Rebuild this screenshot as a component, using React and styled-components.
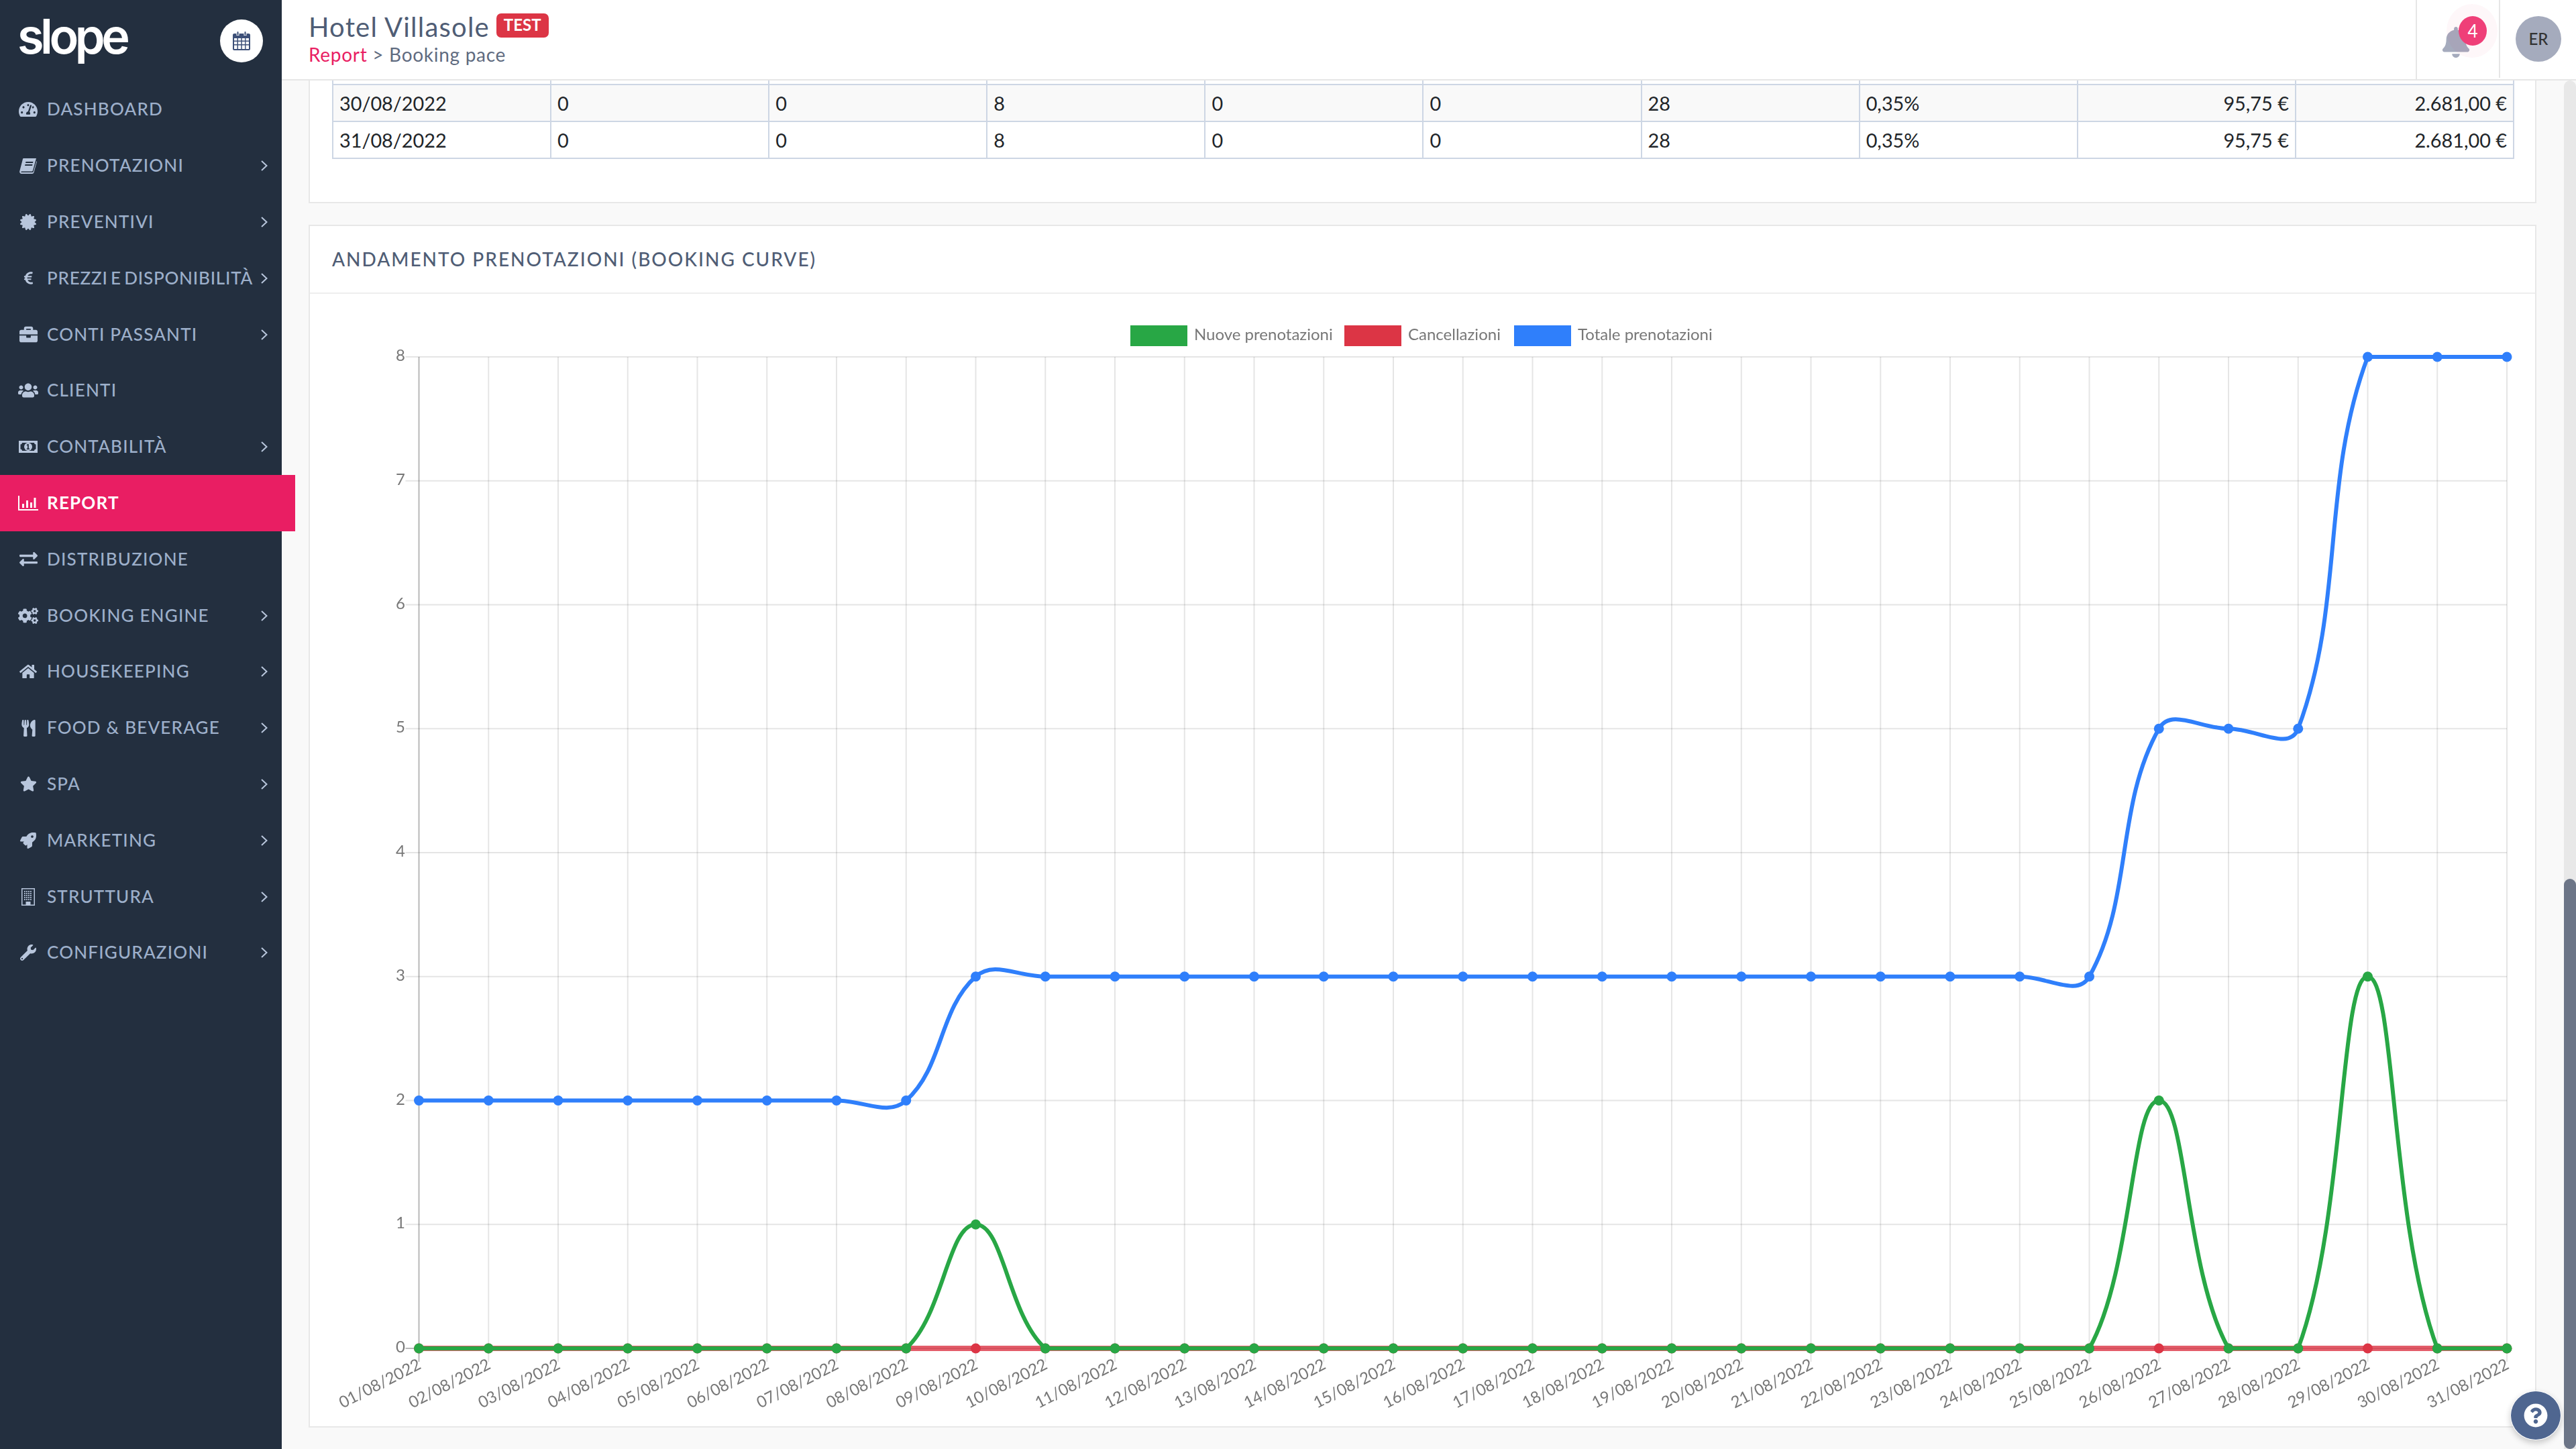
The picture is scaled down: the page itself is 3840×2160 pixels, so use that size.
import React from 'react';
import styled, { createGlobalStyle } from 'styled-components';
import {
    FaTachometerAlt, FaCertificate, FaEuroSign, FaBriefcase, FaUsers, FaExchangeAlt,
    FaCogs, FaHome, FaUtensils, FaStar, FaRocket, FaWrench, FaBell, FaQuestionCircle,
} from 'react-icons/fa';

// --- small hand drawn icons (the ones the packages don't have in this shape) ---

const BookIcon = () => (
    <svg width="26" height="24" viewBox="0 0 26 24">
        <path fill="currentColor" d="M6 1h19l-5 18c-.4 1-1 1.500-2 1.500H3.500c-1 0-1.500 1-.8 1.500H19c.8 0 1.500-.4 1.800-1.200L25.500 5 26 6l-4.500 16c-.3 1-1.200 2-2.500 2H3C1 24-.3 22 .3 20L5 2c.2-.6.500-1 1-1z" />
        <rect x="9" y="6" width="11" height="2" fill="#232f3f" transform="skewX(-14) translate(2 0)" />
        <rect x="8" y="10" width="11" height="2" fill="#232f3f" transform="skewX(-14) translate(3 0)" />
    </svg>
);

const MoneyIcon = () => (
    <svg width="28" height="18" viewBox="0 0 28 18">
        <path fill="currentColor" fillRule="evenodd" d="M0 0h28v18H0zM5 3c0 1.500-1 2.500-2.500 2.500v7C4 12.500 5 13.500 5 15h18c0-1.500 1-2.500 2.500-2.500v-7C24 5.500 23 4.500 23 3z" />
        <circle cx="14" cy="9" r="6" fill="currentColor" />
        <path fill="#232f3f" d="M13 5h1.800v6.500H16V13h-4.200v-1.500H13V6.800l-1.200.7V6z" />
    </svg>
);

const BarsIcon = () => (
    <svg width="30" height="22" viewBox="0 0 30 22">
        <path fill="currentColor" d="M0 0h2v20h28v2H0zM6 12h3v6H6zM12 7h3v11h-3zM18 10h3v8h-3zM23.500 3h3v15h-3z" />
    </svg>
);

const BuildingIcon = () => (
    <svg width="20" height="26" viewBox="0 0 20 26">
        <path fill="currentColor" fillRule="evenodd" d="M0 0h20v26H0zM1.500 1.500v23h5V20h7v4.500h5v-23z" />
        {[4, 7, 10, 13].map((x) => [4, 7, 10, 13, 16].map((y) => (
            <rect key={`${x}-${y}`} x={x} y={y} width="1.800" height="1.800" fill="currentColor" />
        )))}
    </svg>
);

const CalendarIcon = () => (
    <svg width="26" height="28" viewBox="0 0 26 28">
        <path fill="#3d5078" fillRule="evenodd" d="M2 3h3.500v3h4V3h7v3h4V3H24c1 0 2 1 2 2v21c0 1-1 2-2 2H2c-1 0-2-1-2-2V5c0-1 1-2 2-2zM2 10v3.500h4.500V10zm6 0v3.500h4.300V10zm5.800 0v3.500h4.300V10zm5.700 0v3.500H24V10zM2 15v4h4.500v-4zm6 0v4h4.300v-4zm5.800 0v4h4.300v-4zm5.700 0v4H24v-4zM2 20.500V26h4.500v-5.500zm6 0V26h4.300v-5.500zm5.800 0V26h4.300v-5.500zm5.700 0V26H24v-5.500z" />
        <rect x="6.500" y="0" width="2" height="5.500" rx="1" fill="#3d5078" />
        <rect x="17.500" y="0" width="2" height="5.500" rx="1" fill="#3d5078" />
    </svg>
);

const Chevron = () => (
    <svg width="10" height="16" viewBox="0 0 10 16">
        <path d="M1 1l7.500 7L1 15" fill="none" stroke="currentColor" strokeWidth="2" />
    </svg>
);

// --- data ---

const MENU = [
    { label: 'DASHBOARD', Icon: FaTachometerAlt, size: 28 },
    { label: 'PRENOTAZIONI', Icon: BookIcon, more: true },
    { label: 'PREVENTIVI', Icon: FaCertificate, size: 24, more: true },
    { label: 'PREZZI E DISPONIBILITÀ', Icon: FaEuroSign, size: 21, more: true, tight: true },
    { label: 'CONTI PASSANTI', Icon: FaBriefcase, size: 27, more: true },
    { label: 'CLIENTI', Icon: FaUsers, size: 30 },
    { label: 'CONTABILITÀ', Icon: MoneyIcon, more: true },
    { label: 'REPORT', Icon: BarsIcon, active: true },
    { label: 'DISTRIBUZIONE', Icon: FaExchangeAlt, size: 27 },
    { label: 'BOOKING ENGINE', Icon: FaCogs, size: 30, more: true },
    { label: 'HOUSEKEEPING', Icon: FaHome, size: 26, more: true },
    { label: 'FOOD & BEVERAGE', Icon: FaUtensils, size: 25, more: true },
    { label: 'SPA', Icon: FaStar, size: 25, more: true },
    { label: 'MARKETING', Icon: FaRocket, size: 24, more: true },
    { label: 'STRUTTURA', Icon: BuildingIcon, more: true },
    { label: 'CONFIGURAZIONI', Icon: FaWrench, size: 24, more: true },
];

const ROWS = [
    ['30/08/2022', '0', '0', '8', '0', '0', '28', '0,35%', '95,75 €', '2.681,00 €'],
    ['31/08/2022', '0', '0', '8', '0', '0', '28', '0,35%', '95,75 €', '2.681,00 €'],
];

const DAYS = Array.from({ length: 31 }, (_, i) => `${String(i + 1).padStart(2, '0')}/08/2022`);

const valuesFrom = (base, points) => DAYS.map((_, i) => (i in points ? points[i] : base));

const TOTAL = DAYS.map((_, i) => {
    if (i <= 7) return 2;
    if (i <= 24) return 3;
    if (i <= 27) return 5;
    return 8;
});
const NEW = valuesFrom(0, { 8: 1, 25: 2, 28: 3 });
const CANCELLED = valuesFrom(0, {});

// chart geometry, in page pixels
const LEFT = 624.5;
const RIGHT = 3737;
const ZERO = 2010;
const TOP = 532;
const xAt = (i) => LEFT + (i * (RIGHT - LEFT)) / 30;
const yAt = (v) => ZERO - (v * (ZERO - TOP)) / 8;

// same bezier maths as chart.js (tension 0.4, capped to the chart area)
function curve(values) {
    const pts = values.map((v, i) => ({ x: xAt(i), y: yAt(v) }));
    const cap = (p) => ({
        x: Math.min(RIGHT, Math.max(LEFT, p.x)),
        y: Math.min(ZERO, Math.max(TOP, p.y)),
    });
    const ctrl = pts.map((cur, i) => {
        const prev = pts[i - 1] || cur;
        const next = pts[i + 1] || cur;
        const d01 = Math.hypot(cur.x - prev.x, cur.y - prev.y);
        const d12 = Math.hypot(next.x - cur.x, next.y - cur.y);
        const total = d01 + d12 || 1;
        const fa = (0.4 * d01) / total;
        const fb = (0.4 * d12) / total;
        return {
            before: cap({ x: cur.x - fa * (next.x - prev.x), y: cur.y - fa * (next.y - prev.y) }),
            after: cap({ x: cur.x + fb * (next.x - prev.x), y: cur.y + fb * (next.y - prev.y) }),
        };
    });
    let d = `M${pts[0].x} ${pts[0].y}`;
    for (let i = 1; i < pts.length; i++) {
        const a = ctrl[i - 1].after;
        const b = ctrl[i].before;
        d += `C${a.x} ${a.y} ${b.x} ${b.y} ${pts[i].x} ${pts[i].y}`;
    }
    return d;
}

const SERIES = [
    { name: 'total', color: '#2f7ffb', values: TOTAL, width: 6, opacity: 1 },
    { name: 'cancelled', color: '#dc3545', values: CANCELLED, width: 8, opacity: 0.8 },
    { name: 'new', color: '#28a745', values: NEW, width: 6, opacity: 1 },
];

const LEGEND = [
    { label: 'Nuove prenotazioni', color: '#28a745', x: 1685 },
    { label: 'Cancellazioni', color: '#dc3545', x: 2004 },
    { label: 'Totale prenotazioni', color: '#2f7ffb', x: 2257 },
];

// --- the chart ---

const BookingChart = () => (
    <ChartSvg width="3317" height="1688" viewBox="462 438 3317 1688">
        {LEGEND.map((item) => (
            <g key={item.label}>
                <rect x={item.x} y="485" width="85" height="31" fill={item.color} />
                <ChartLabel x={item.x + 95} y="501" dominantBaseline="middle">{item.label}</ChartLabel>
            </g>
        ))}
        {[0, 1, 2, 3, 4, 5, 6, 7, 8].map((v) => (
            <g key={v}>
                <GridLine x1={LEFT - 20} x2={RIGHT} y1={yAt(v)} y2={yAt(v)} $strong={v === 0} />
                <ChartLabel x="604" y={yAt(v)} textAnchor="end" dominantBaseline="middle">{v}</ChartLabel>
            </g>
        ))}
        {DAYS.map((day, i) => (
            <g key={day}>
                <GridLine x1={xAt(i)} x2={xAt(i)} y1={TOP} y2={ZERO + 20} $strong={i === 0} />
                <ChartLabel
                    x={xAt(i) + 2}
                    y={ZERO + 24}
                    textAnchor="end"
                    dominantBaseline="middle"
                    transform={`rotate(-27 ${xAt(i) + 2} ${ZERO + 24})`}
                >
                    {day}
                </ChartLabel>
            </g>
        ))}
        {SERIES.map((s) => (
            <g key={s.name}>
                <path d={curve(s.values)} fill="none" stroke={s.color} strokeWidth={s.width} strokeOpacity={s.opacity} />
                {s.values.map((v, i) => (
                    <circle key={i} cx={xAt(i)} cy={yAt(v)} r="7.5" fill={s.color} />
                ))}
            </g>
        ))}
    </ChartSvg>
);

// --- page ---

const App = () => (
    <Page>
        <GlobalStyle />
        <Sidebar>
            <Brand>
                <Logo>slope</Logo>
                <CalendarButton><CalendarIcon /></CalendarButton>
            </Brand>
            {MENU.map(({ label, Icon, size, more, active, tight }) => (
                <MenuItem key={label} $active={active}>
                    <MenuIcon><Icon size={size} /></MenuIcon>
                    <MenuLabel $active={active} $tight={tight}>{label}</MenuLabel>
                    {more && <MenuArrow><Chevron /></MenuArrow>}
                </MenuItem>
            ))}
        </Sidebar>
        <Main>
            <Header>
                <Titles>
                    <TitleRow>
                        <Title>Hotel Villasole</Title>
                        <TestBadge>TEST</TestBadge>
                    </TitleRow>
                    <Breadcrumb><em>Report</em> &gt; Booking pace</Breadcrumb>
                </Titles>
                <BellCell>
                    <FaBell size={46} />
                    <BellBadge>4</BellBadge>
                </BellCell>
                <UserCell><Avatar>ER</Avatar></UserCell>
            </Header>
            <Body>
                <Content>
                    <TableCard>
                        <DataTable>
                            <tbody>
                                <CutRow>
                                    {ROWS[0].map((_, i) => <td key={i} />)}
                                </CutRow>
                                {ROWS.map((row, r) => (
                                    <DataRow key={row[0]} $striped={r === 0}>
                                        {row.map((cell, i) => (
                                            <DataCell key={i} $right={i >= 8}>{cell}</DataCell>
                                        ))}
                                    </DataRow>
                                ))}
                            </tbody>
                        </DataTable>
                    </TableCard>
                    <ChartCard>
                        <CardTitle>ANDAMENTO PRENOTAZIONI (BOOKING CURVE)</CardTitle>
                        <BookingChart />
                    </ChartCard>
                </Content>
                <ScrollTrack><ScrollThumb /></ScrollTrack>
            </Body>
        </Main>
        <HelpButton><FaQuestionCircle size={36} /></HelpButton>
    </Page>
);

const GlobalStyle = createGlobalStyle`
    html, body {
        margin: 0;
        padding: 0;
        background: #f9f9f9;
        overflow: hidden;
    }
    * {
        box-sizing: border-box;
    }
`;

const Page = styled.div`
    position: relative;
    display: flex;
    width: 3840px;
    height: 2160px;
    overflow: hidden;
    font-family: Lato, "Liberation Sans", sans-serif;
    background: #f9f9f9;
`;

const Sidebar = styled.nav`
    position: relative;
    z-index: 2;
    flex: 0 0 420px;
    background: #232f3f;
`;

const Brand = styled.div`
    display: flex;
    align-items: center;
    justify-content: space-between;
    height: 121.5px;
    padding: 0 28px 0 26px;
`;

const Logo = styled.div`
    margin-top: -14px;
    font-family: Inter, sans-serif;
    font-size: 72px;
    font-weight: 600;
    line-height: 1;
    letter-spacing: -5.5px;
    color: #fff;
`;

const CalendarButton = styled.div`
    display: flex;
    align-items: center;
    justify-content: center;
    width: 64px;
    height: 64px;
    border-radius: 50%;
    background: #fff;
`;

const MenuItem = styled.div`
    display: flex;
    align-items: center;
    height: 83.8px;
    padding: 0 21px 0 27px;
    margin-right: ${(p) => (p.$active ? '-20px' : '0')};
    background: ${(p) => (p.$active ? '#e91e63' : 'transparent')};
    color: ${(p) => (p.$active ? '#fff' : '#b8c6dc')};
`;

const MenuIcon = styled.span`
    display: flex;
    align-items: center;
    justify-content: center;
    flex: 0 0 30px;
`;

const MenuLabel = styled.span`
    margin-left: 13px;
    padding-bottom: 2px;
    font-size: 26px;
    font-weight: ${(p) => (p.$active ? 700 : 500)};
    letter-spacing: ${(p) => (p.$tight ? '0.8px' : '1.2px')};
    word-spacing: ${(p) => (p.$tight ? '-3px' : '0')};
    white-space: nowrap;
    color: ${(p) => (p.$active ? '#fff' : '#9dafca')};
`;

const MenuArrow = styled.span`
    display: flex;
    margin-left: auto;
`;

const Main = styled.div`
    display: flex;
    flex-direction: column;
    flex: 1;
    min-width: 0;
`;

const Header = styled.header`
    display: flex;
    flex: 0 0 120px;
    background: #fff;
    border-bottom: 2px solid #e6e6e6;
`;

const Titles = styled.div`
    flex: 1;
    padding: 16px 0 0 40px;
`;

const TitleRow = styled.div`
    display: flex;
    align-items: flex-start;
`;

const Title = styled.h1`
    margin: 0;
    font-size: 40px;
    font-weight: 400;
    line-height: 48px;
    letter-spacing: 1.2px;
    color: #4f5d75;
`;

const TestBadge = styled.span`
    margin: 4px 0 0 10px;
    padding: 0 11px;
    height: 36px;
    border-radius: 7px;
    background: #dc3545;
    color: #fff;
    font-size: 24px;
    font-weight: 700;
    line-height: 34px;
`;

const Breadcrumb = styled.div`
    font-size: 28px;
    line-height: 34px;
    letter-spacing: 0.7px;
    color: #5f6b80;
    em {
        font-style: normal;
        color: #e91e63;
    }
`;

const BellCell = styled.div`
    position: relative;
    display: flex;
    align-items: flex-end;
    flex: 0 0 124px;
    padding: 0 0 32px 35px;
    border-left: 2px solid #e6e6e6;
    color: #a5abbd;
    &::before {
        content: "";
        position: absolute;
        left: 44px;
        top: 6px;
        width: 76px;
        height: 80px;
        border-radius: 50%;
        background: rgba(233, 30, 99, 0.035);
    }
`;

const BellBadge = styled.span`
    position: absolute;
    left: 62px;
    top: 24px;
    width: 42px;
    height: 44px;
    border-radius: 50%;
    background: #ef3f78;
    color: #fff;
    font-size: 26px;
    line-height: 44px;
    text-align: center;
`;

const UserCell = styled.div`
    flex: 0 0 115px;
    height: 116px;
    padding: 24px 0 0 23px;
    border-left: 2px solid #e6e6e6;
`;

const Avatar = styled.div`
    width: 68px;
    height: 68px;
    border-radius: 50%;
    background: #a5abbd;
    color: #333;
    font-size: 24px;
    font-weight: 500;
    line-height: 68px;
    text-align: center;
`;

const Body = styled.div`
    display: flex;
    flex: 1;
    min-height: 0;
`;

const Content = styled.main`
    flex: 1;
    min-width: 0;
    padding: 0 41px 0 40px;
`;

const TableCard = styled.section`
    height: 183px;
    padding: 0 31px 0 33px;
    background: #fff;
    border: 2px solid #e8e8e8;
    border-top: 0;
`;

const DataTable = styled.table`
    width: 100%;
    table-layout: fixed;
    border-collapse: collapse;
    font-size: 28.8px;
    color: #212529;
    td {
        border: 2px solid #cdd6e4;
    }
    tr:first-child td {
        border-top: 0;
    }
`;

const CutRow = styled.tr`
    height: 6px;
`;

const DataRow = styled.tr`
    height: 55px;
    background: ${(p) => (p.$striped ? '#f9f9f9' : '#fff')};
`;

const DataCell = styled.td`
    padding: 0 9px;
    text-align: ${(p) => (p.$right ? 'right' : 'left')};
`;

const ChartCard = styled.section`
    margin-top: 32px;
    background: #fff;
    border: 2px solid #e8e8e8;
`;

const CardTitle = styled.h2`
    height: 101px;
    margin: 0;
    padding: 0 33px;
    font-size: 28px;
    font-weight: 500;
    line-height: 98px;
    letter-spacing: 2px;
    color: #4f5d75;
    border-bottom: 2px solid #eeeeee;
`;

const ChartSvg = styled.svg`
    display: block;
    filter: blur(0.6px);
`;

const GridLine = styled.line`
    stroke: ${(p) => (p.$strong ? 'rgba(0, 0, 0, 0.28)' : 'rgba(0, 0, 0, 0.1)')};
    stroke-width: 2;
`;

const ChartLabel = styled.text`
    font-family: Lato, "Liberation Sans", sans-serif;
    font-size: 24px;
    fill: #777;
`;

const ScrollTrack = styled.div`
    display: flex;
    flex-direction: column;
    flex: 0 0 18px;
    padding-top: 1190px;
    background: #e8e8e8;
    border-radius: 9px 9px 0 0;
`;

const ScrollThumb = styled.div`
    flex: 1;
    background: #6c7587;
    border-radius: 9px;
`;

const HelpButton = styled.div`
    position: absolute;
    left: 3742px;
    top: 2073px;
    z-index: 3;
    display: flex;
    align-items: center;
    justify-content: center;
    width: 76px;
    height: 74px;
    border-radius: 50%;
    border: 1px solid #fff;
    background: #4f6690;
    color: #fff;
    box-shadow: 0 4px 10px rgba(0, 0, 0, 0.2);
`;

export default App;
